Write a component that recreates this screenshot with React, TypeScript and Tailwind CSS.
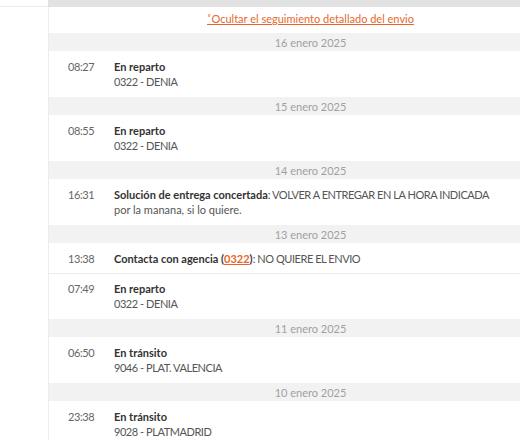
import React from "react";

type Entry = { time: string; title: React.ReactNode; sub?: React.ReactNode };
type Group = { date: string; entries: Entry[] };

const Caps = ({ children }: { children: React.ReactNode }) => (
  <span className="tracking-[-0.45px]">{children}</span>
);

const B = ({ children }: { children: React.ReactNode }) => (
  <b className="font-bold text-[#333]">{children}</b>
);

const groups: Group[] = [
  { date: "16 enero 2025", entries: [{ time: "08:27", title: <B>En reparto</B>, sub: <Caps>0322 - DENIA</Caps> }] },
  { date: "15 enero 2025", entries: [{ time: "08:55", title: <B>En reparto</B>, sub: <Caps>0322 - DENIA</Caps> }] },
  {
    date: "14 enero 2025",
    entries: [
      {
        time: "16:31",
        title: (
          <>
            <B>Solución de entrega concertada</B>
            <Caps>: VOLVER A ENTREGAR EN LA HORA INDICADA</Caps>
          </>
        ),
        sub: "por la manana, si lo quiere.",
      },
    ],
  },
  {
    date: "13 enero 2025",
    entries: [
      {
        time: "13:38",
        title: (
          <>
            <B>
              Contacta con agencia (<span className="text-[#e8662c] underline">0322</span>)
            </B>
            <Caps>: NO QUIERE EL ENVIO</Caps>
          </>
        ),
      },
      { time: "07:49", title: <B>En reparto</B>, sub: <Caps>0322 - DENIA</Caps> },
    ],
  },
  { date: "11 enero 2025", entries: [{ time: "06:50", title: <B>En tránsito</B>, sub: <Caps>9046 - PLAT. VALENCIA</Caps> }] },
  { date: "10 enero 2025", entries: [{ time: "23:38", title: <B>En tránsito</B>, sub: <Caps>9028 - PLATMADRID</Caps> }] },
];

export default function App() {
  return (
    <div className="w-[520px] h-[440px] overflow-hidden bg-white flex items-start font-['Lato',sans-serif] text-[11px] leading-[15px] text-[#555]">
      <div className="w-[48px] shrink-0">
        <div className="h-[6px]" />
        <div className="border-t border-[#ececec]" />
      </div>
      <div className="w-[524px] shrink-0">
        <div className="h-[7px] bg-[#e2e2e2]" />
        <div className="border-l border-[#ececec]">
          <div className="h-[26px] flex items-center justify-center pb-[3px]">
            <a className="text-[#e8662c] underline text-[11px]">˚Ocultar el seguimiento detallado del envio</a>
          </div>
          {groups.map((g) => (
            <div key={g.date}>
              <div className="h-[18px] bg-[#f2f2f2] flex items-center justify-center text-[#a0a0a0]">{g.date}</div>
              {g.entries.map((e, i) => (
                <div
                  key={i}
                  className={`flex pl-[19px] ${i > 0 ? "border-t border-[#ececec] pt-[7px] pb-[8px]" : g.entries.length > 1 ? "pt-[8px] pb-[7px]" : "pt-[8px] pb-[8px]"}`}
                >
                  <div className="w-[46px] shrink-0 text-[#666] tracking-[-0.4px]">{e.time}</div>
                  <div>
                    <div>{e.title}</div>
                    {e.sub && <div>{e.sub}</div>}
                  </div>
                </div>
              ))}
            </div>
          ))}
        </div>
      </div>
    </div>
  );
}
